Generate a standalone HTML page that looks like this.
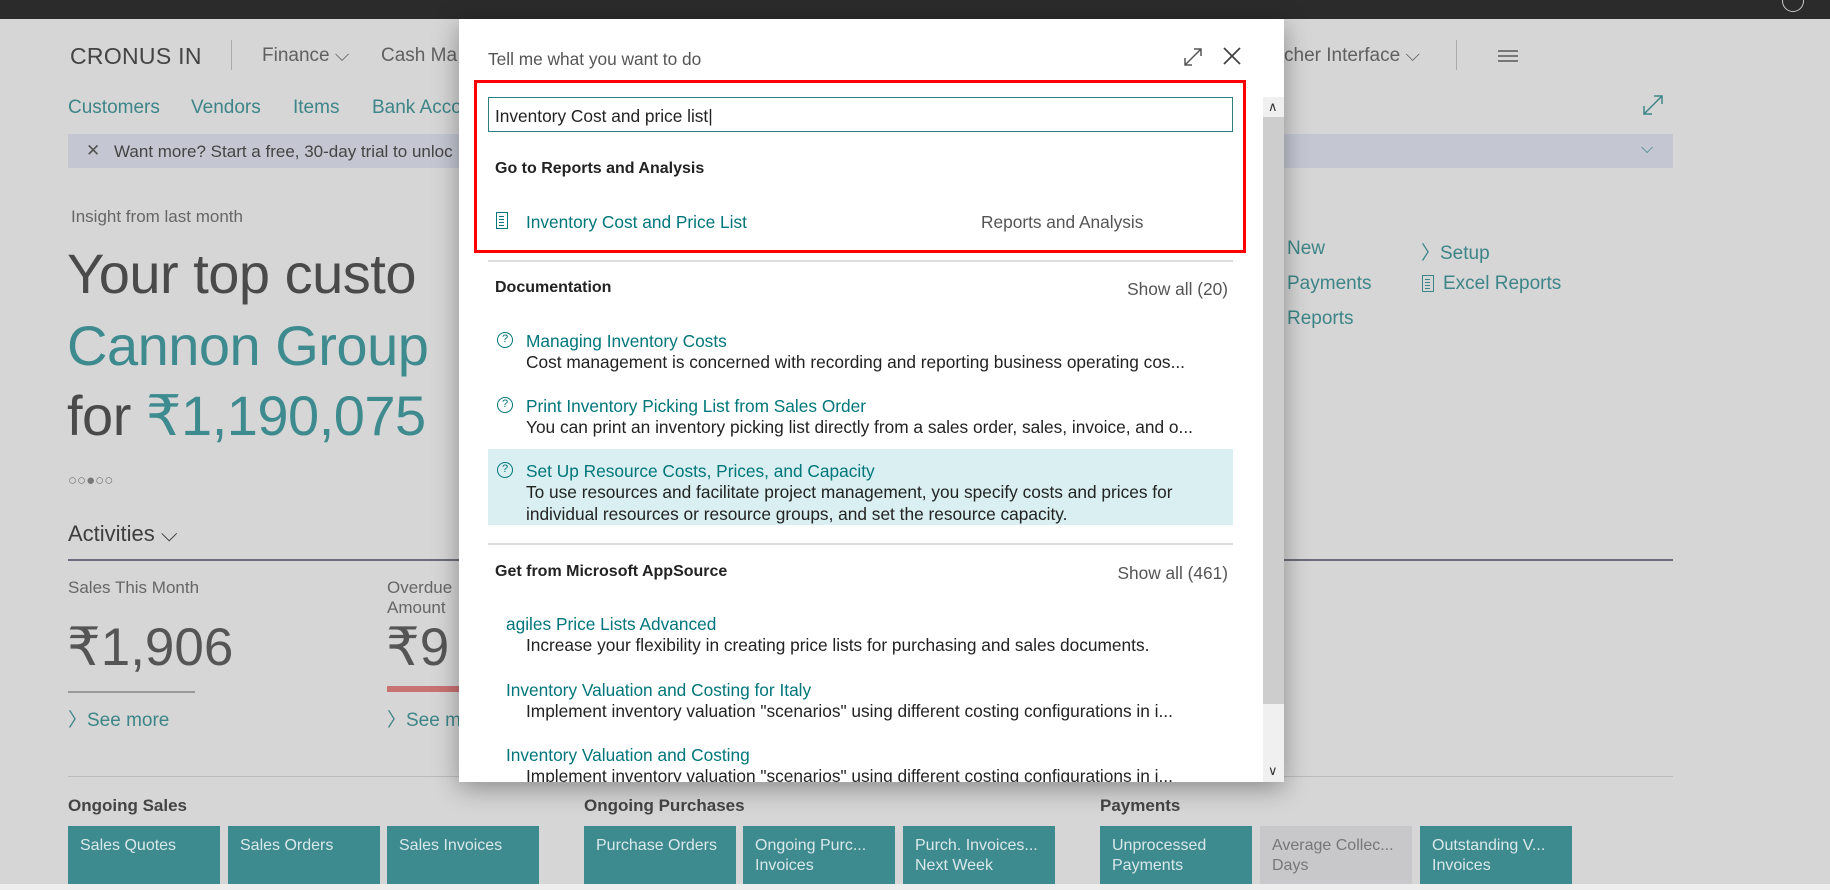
<!DOCTYPE html>
<html><head><meta charset="utf-8"><style>
*{margin:0;padding:0;box-sizing:border-box}
body{width:1830px;height:890px;overflow:hidden;background:#d6d6d6;font-family:"Liberation Sans",sans-serif;position:relative;color:#4e4e4e}
.a{position:absolute;white-space:nowrap}
.t{color:#3d8588}
.tile{position:absolute;top:826px;height:58px;width:152px;background:#3d8a8f;color:#d9e8e9;font-size:16px;padding:10px 12px;line-height:20px}
.dlg{position:absolute;left:459px;top:19px;width:825px;height:763px;background:#fff;box-shadow:0 6px 24px rgba(0,0,0,.35);overflow:hidden}
.dlg .a{font-size:17.3px}
.tl{color:#00767a}
.dk{color:#222}
.q{position:absolute;width:16px;height:16px;border:1.3px solid #00767a;border-radius:50%;font-size:11px;line-height:13px;text-align:center;color:#00767a}
.doc{position:absolute;width:12px;height:17px;border:1.5px solid #00767a}
.doc:before{content:"";position:absolute;left:2px;top:3px;width:5px;height:1px;background:currentColor;box-shadow:0 3px 0,0 6px 0,0 9px 0}
</style></head><body>
<div class="a" style="left:0;top:0;width:1830px;height:19px;background:#2b2b2b"></div>
<div class="a" style="left:1782px;top:-10px;width:22px;height:22px;border:1px solid #ccc;border-radius:50%"></div>

<div class="a" style="left:70px;top:43px;font-size:23px;color:#444;letter-spacing:0.3px">CRONUS IN</div>
<div class="a" style="left:231px;top:40px;width:1px;height:30px;background:#aaa"></div>
<div class="a" style="left:262px;top:45px;font-size:19px;color:#606060">Finance ⌵</div>
<div class="a" style="left:381px;top:45px;font-size:19px;color:#606060">Cash Ma</div>
<div class="a" style="left:1284px;top:45px;font-size:19px;color:#606060">cher Interface ⌵</div>
<div class="a" style="left:1456px;top:40px;width:1px;height:30px;background:#aaa"></div>
<div class="a" style="left:1498px;top:50px;width:20px;height:2px;background:#777;box-shadow:0 5px 0 #777,0 10px 0 #777"></div>

<div class="a t" style="left:68px;top:97px;font-size:19px">Customers</div>
<div class="a t" style="left:191px;top:97px;font-size:19px">Vendors</div>
<div class="a t" style="left:293px;top:97px;font-size:19px">Items</div>
<div class="a t" style="left:372px;top:97px;font-size:19px">Bank Acco</div>
<svg class="a" style="left:1642px;top:94px" width="22" height="22"><path d="M2 20L20 2M12 2h8v8M2 12v8h8" stroke="#3d8588" stroke-width="1.5" fill="none"/></svg>

<div class="a" style="left:68px;top:134px;width:1605px;height:34px;background:#c4c7d2"></div>
<div class="a" style="left:86px;top:141px;font-size:17px;color:#555">✕</div>
<div class="a" style="left:114px;top:142px;font-size:17px;color:#444">Want more? Start a free, 30-day trial to unloc</div>
<div class="a" style="left:1641px;top:140px;font-size:16px;color:#3d8588">⌵</div>

<div class="a" style="left:71px;top:207px;font-size:17px;color:#666">Insight from last month</div>
<div class="a" style="left:67px;top:239px;font-size:56px;line-height:70px;color:#4a4a4a;letter-spacing:-0.5px">Your top custo</div>
<div class="a" style="left:67px;top:311px;font-size:56px;line-height:70px;color:#3d8a8f;letter-spacing:-0.5px">Cannon Group</div>
<div class="a" style="left:67px;top:381px;font-size:56px;line-height:70px;color:#4a4a4a;letter-spacing:-0.5px">for <span style="color:#3d8a8f">₹1,190,075</span></div>
<div class="a" style="left:68px;top:472px;font-size:15px;color:#777;letter-spacing:0px">○○●○○</div>

<div class="a" style="left:68px;top:521px;font-size:22px;color:#3e3e3e">Activities ⌵</div>
<div class="a" style="left:68px;top:559px;width:1605px;height:2px;background:#6b6e7a"></div>
<div class="a" style="left:68px;top:578px;font-size:17px;color:#666">Sales This Month</div>
<div class="a" style="left:67px;top:617px;font-size:53px;color:#555">₹1,906</div>
<div class="a" style="left:68px;top:691px;width:127px;height:2px;background:#999"></div>
<div class="a t" style="left:68px;top:705px;font-size:19px">〉See more</div>
<div class="a" style="left:387px;top:578px;font-size:17px;color:#666;line-height:20px">Overdue<br>Amount</div>
<div class="a" style="left:386px;top:617px;font-size:53px;color:#555">₹9</div>
<div class="a" style="left:387px;top:686px;width:72px;height:6px;background:#c97272"></div>
<div class="a t" style="left:387px;top:705px;font-size:19px">〉See m</div>

<div class="a t" style="left:1287px;top:238px;font-size:19px">New</div>
<div class="a t" style="left:1287px;top:273px;font-size:19px">Payments</div>
<div class="a t" style="left:1287px;top:308px;font-size:19px">Reports</div>
<div class="a t" style="left:1421px;top:238px;font-size:19px">〉Setup</div>
<div class="doc" style="left:1422px;top:275px;color:#3d8588;border-color:#3d8588"></div>
<div class="a t" style="left:1443px;top:273px;font-size:19px">Excel Reports</div>

<div class="a" style="left:68px;top:776px;width:1605px;height:1px;background:#bbb"></div>
<div class="a" style="left:68px;top:796px;font-size:17px;color:#444;font-weight:bold">Ongoing Sales</div>
<div class="a" style="left:584px;top:796px;font-size:17px;color:#444;font-weight:bold">Ongoing Purchases</div>
<div class="a" style="left:1100px;top:796px;font-size:17px;color:#444;font-weight:bold">Payments</div>
<div class="tile" style="left:68px">Sales Quotes</div>
<div class="tile" style="left:228px">Sales Orders</div>
<div class="tile" style="left:387px">Sales Invoices</div>
<div class="tile" style="left:584px">Purchase Orders</div>
<div class="tile" style="left:743px">Ongoing Purc...<br>Invoices</div>
<div class="tile" style="left:903px">Purch. Invoices...<br>Next Week</div>
<div class="tile" style="left:1100px">Unprocessed<br>Payments</div>
<div class="tile" style="left:1260px;background:#c8c8cb;color:#777">Average Collec...<br>Days</div>
<div class="tile" style="left:1420px">Outstanding V...<br>Invoices</div>
<div class="a" style="left:0;top:884px;width:1830px;height:6px;background:#eee"></div>

<div class="dlg">
 <div class="a" style="left:29px;top:30px;color:#555">Tell me what you want to do</div>
 <svg class="a" style="left:724px;top:28px" width="20" height="20"><path d="M2 18L18 2M11 2h7v7M2 11v7h7" stroke="#555" stroke-width="1.5" fill="none"/></svg>
 <svg class="a" style="left:763px;top:27px" width="20" height="20"><path d="M2 2L18 18M18 2L2 18" stroke="#444" stroke-width="1.8"/></svg>
 <div class="a" style="left:15px;top:61px;width:772px;height:173px;border:3px solid #f00"></div>
 <div class="a" style="left:29px;top:78px;width:745px;height:35px;border:1px solid #2b8083"></div>
 <div class="a dk" style="left:36px;top:87px">Inventory Cost and price list|</div>
 <div class="a dk" style="left:36px;top:141px;font-weight:bold;font-size:16px">Go to Reports and Analysis</div>
 <div class="doc" style="left:37px;top:193px;color:#00767a"></div>
 <div class="a tl" style="left:67px;top:193px">Inventory Cost and Price List</div>
 <div class="a" style="left:522px;top:193px;color:#555">Reports and Analysis</div>
 <div class="a" style="left:29px;top:241px;width:745px;height:2px;background:#ddd"></div>
 <div class="a dk" style="left:36px;top:260px;font-weight:bold;font-size:16px">Documentation</div>
 <div class="a" style="right:56px;top:260px;color:#555">Show all (20)</div>
 <div class="q" style="left:38px;top:313px">?</div>
 <div class="a tl" style="left:67px;top:312px">Managing Inventory Costs</div>
 <div class="a dk" style="left:67px;top:333px">Cost management is concerned with recording and reporting business operating cos...</div>
 <div class="q" style="left:38px;top:378px">?</div>
 <div class="a tl" style="left:67px;top:377px">Print Inventory Picking List from Sales Order</div>
 <div class="a dk" style="left:67px;top:398px">You can print an inventory picking list directly from a sales order, sales, invoice, and o...</div>
 <div class="a" style="left:29px;top:430px;width:745px;height:76px;background:#d9eff1"></div>
 <div class="q" style="left:38px;top:443px">?</div>
 <div class="a tl" style="left:67px;top:442px">Set Up Resource Costs, Prices, and Capacity</div>
 <div class="a dk" style="left:67px;top:463px">To use resources and facilitate project management, you specify costs and prices for</div>
 <div class="a dk" style="left:67px;top:485px">individual resources or resource groups, and set the resource capacity.</div>
 <div class="a" style="left:29px;top:524px;width:745px;height:2px;background:#ddd"></div>
 <div class="a dk" style="left:36px;top:544px;font-weight:bold;font-size:16px">Get from Microsoft AppSource</div>
 <div class="a" style="right:56px;top:544px;color:#555">Show all (461)</div>
 <div class="a tl" style="left:47px;top:595px">agiles Price Lists Advanced</div>
 <div class="a dk" style="left:67px;top:616px">Increase your flexibility in creating price lists for purchasing and sales documents.</div>
 <div class="a tl" style="left:47px;top:661px">Inventory Valuation and Costing for Italy</div>
 <div class="a dk" style="left:67px;top:682px">Implement inventory valuation "scenarios" using different costing configurations in i...</div>
 <div class="a tl" style="left:47px;top:726px">Inventory Valuation and Costing</div>
 <div class="a dk" style="left:67px;top:747px">Implement inventory valuation "scenarios" using different costing configurations in i...</div>
 <div class="a" style="left:804px;top:78px;width:21px;height:685px;background:#f0f0f0"></div>
 <div class="a" style="left:804px;top:98px;width:21px;height:587px;background:#cdcdcd"></div>
 <div class="a" style="left:809px;top:80px;font-size:13px;color:#333">∧</div>
 <div class="a" style="left:809px;top:744px;font-size:13px;color:#333">∨</div>
</div>
</body></html>
